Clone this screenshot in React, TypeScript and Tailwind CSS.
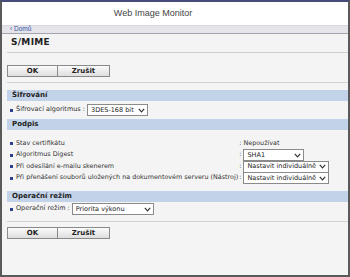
import React from 'react'

const font = { fontFamily: '"DejaVu Sans", Verdana, sans-serif' }

const Chevron = () => (
    <svg width="7" height="5" viewBox="0 0 7 5" className="shrink-0">
        <path d="M0.8 0.8 L3.5 3.8 L6.2 0.8" fill="none" stroke="#333" strokeWidth="1.2" />
    </svg>
)

const Select = ({ value, width }: { value: string; width: string }) => (
    <span className={`inline-flex items-center justify-between h-[12px] bg-white border border-[#8a8a8a] pl-[3px] pr-[2px] text-[6.5px] text-[#222] ${width}`}>
        <span className="whitespace-nowrap leading-none">{value}</span>
        <Chevron />
    </span>
)

const Bullet = () => <span className="inline-block w-[3px] h-[3px] bg-[#2d3f8f] mr-[3px] shrink-0" />

const Buttons = () => (
    <div className="flex">
        <button className="w-[51px] h-[12px] border border-[#8a8a8a] bg-gradient-to-b from-[#fbfbfb] to-[#dedede] text-[7px] font-bold text-[#222] leading-none">OK</button>
        <button className="w-[52px] h-[12px] border border-l-0 border-[#8a8a8a] bg-gradient-to-b from-[#fbfbfb] to-[#dedede] text-[7px] font-bold text-[#222] leading-none">Zrušit</button>
    </div>
)

const SectionHeader = ({ title }: { title: string }) => (
    <div className="h-[11px] bg-[#c2d2e8] flex items-center pl-[5px] text-[7px] font-bold text-[#222]">{title}</div>
)

const podpis = [
    { label: 'Stav certifikátu', value: <span>Nepoužívat</span>, h: 'h-[11px]' },
    { label: 'Algoritmus Digest', value: <Select value="SHA1" width="w-[61px]" />, h: 'h-[12px]' },
    { label: 'Při odesílání e-mailu skenerem', value: <Select value="Nastavit individuálně" width="w-[86px]" />, h: 'h-[11px]' },
    { label: 'Při přenášení souborů uložených na dokumentovém serveru (Nástroj)', value: <Select value="Nastavit individuálně" width="w-[86px]" />, h: 'h-[12px]' },
]

export default function App() {
    return (
        <div style={font} className="w-[350px] h-[277px] overflow-hidden bg-[#f4f4f4] border-2 border-[#5a5a5a] border-t-[#474b7a] flex flex-col">
            <div className="h-[23px] bg-white flex items-center justify-center pr-[44px] text-[9px] text-[#444]" style={{ fontFamily: '"Liberation Sans", Arial, sans-serif' }}>
                Web Image Monitor
            </div>
            <div className="h-[9px] bg-[#e4e4ea] border-t border-[#d6d6dc] border-b border-b-[#a4a4ac] flex items-center pl-[8px] text-[6.5px] text-[#3452a6] leading-none" style={{ fontFamily: '"Liberation Sans", Arial, sans-serif' }}>
                ‹ Domů
            </div>

            <div className="pl-[5px]">
                <div className="h-[19px] flex items-center pl-[4px] text-[9px] font-bold text-[#222] tracking-[0.3px] border-b border-[#cfcfcf]">S/MIME</div>

                <div className="pt-[12px] pb-[5px] border-b border-[#d2d2d2]">
                    <Buttons />
                </div>

                <div className="mt-[7px]">
                    <SectionHeader title="Šifrování" />
                    <div className="h-[18px] flex items-center pl-[3px] text-[6.5px] text-[#333]">
                        <Bullet />
                        <span className="mr-[2px]">Šifrovací algoritmus :</span>
                        <Select value="3DES-168 bit" width="w-[61px]" />
                    </div>

                    <SectionHeader title="Podpis" />
                    <div className="pt-[8px] pl-[3px] grid grid-cols-[auto_1fr] text-[6.4px] text-[#333]">
                        {podpis.map((r) => (
                            <React.Fragment key={r.label}>
                                <div className={`${r.h} flex items-center whitespace-nowrap`}>
                                    <Bullet />
                                    {r.label}
                                </div>
                                <div className={`${r.h} flex items-center pl-[1px] gap-[2px]`}>
                                    <span>:</span>
                                    {r.value}
                                </div>
                            </React.Fragment>
                        ))}
                    </div>

                    <div className="mt-[7px]">
                        <SectionHeader title="Operační režim" />
                    </div>
                    <div className="h-[14px] flex items-center pl-[3px] text-[6.5px] text-[#333]">
                        <Bullet />
                        <span className="mr-[2px]">Operační režim :</span>
                        <Select value="Priorita výkonu" width="w-[82px]" />
                    </div>
                </div>

                <div className="border-t border-[#d2d2d2] mt-[5px] pt-[5px]">
                    <Buttons />
                </div>
            </div>
        </div>
    )
}
